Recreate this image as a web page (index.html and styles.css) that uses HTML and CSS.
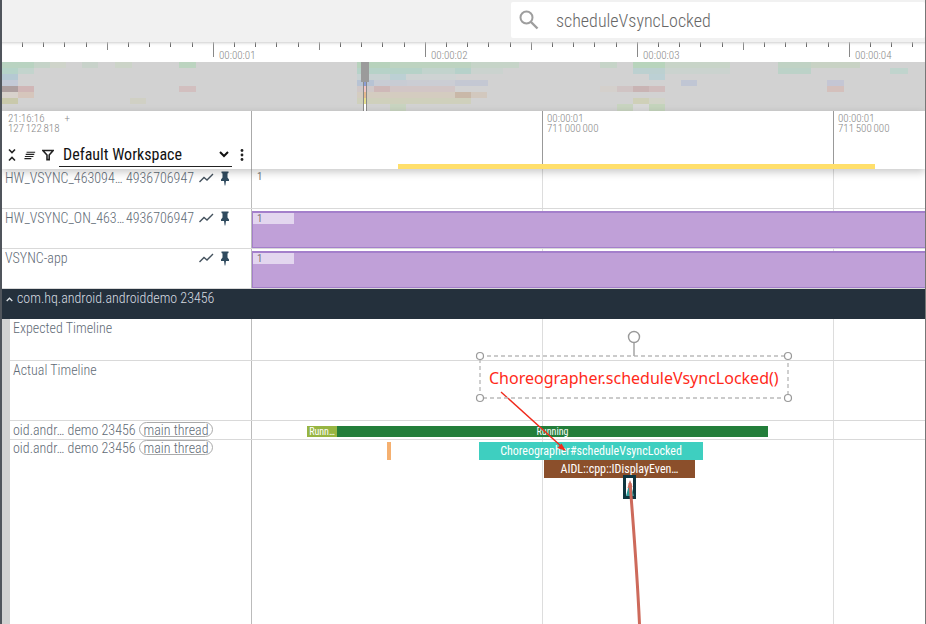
FILE: index.html
```html
<!DOCTYPE html>
<html>
<head>
<meta charset="utf-8">
<title>Trace viewer</title>
<link rel="stylesheet" href="styles.css">
</head>
<body>
<div class="page">

  <div class="topbar">
    <div class="search">
      <svg class="search-icon" width="24" height="24" viewBox="0 0 24 24"><circle cx="9.5" cy="9.5" r="6" fill="none" stroke="#9e9e9e" stroke-width="2"/><path d="M14 14l6.5 6.5" stroke="#9e9e9e" stroke-width="2.4" fill="none"/></svg>
      <span class="search-text">scheduleVsyncLocked</span>
    </div>
  </div>

  <div class="ruler">
    <span class="ruler-label first">00:00:01</span>
    <span class="ruler-label">00:00:02</span>
    <span class="ruler-label">00:00:03</span>
    <span class="ruler-label">00:00:04</span>
  </div>

  <div class="overview">
    <svg width="923" height="49" viewBox="2 62 923 49">
      <!-- row 0 -->
      <rect x="2" y="62" width="32" height="6" fill="#b9d3c1"/><rect x="34" y="62" width="16" height="6" fill="#c5d3c8"/><rect x="50" y="62" width="16" height="6" fill="#cfd4ca"/><rect x="82" y="62" width="16" height="6" fill="#c8d2ca"/><rect x="115" y="62" width="17" height="6" fill="#ccd4c8"/><rect x="179" y="62" width="17" height="6" fill="#bcd4c0"/>
      <rect x="357" y="62" width="33" height="6" fill="#b7d2bc"/><rect x="390" y="62" width="81" height="6" fill="#bdd3c0"/><rect x="471" y="62" width="48" height="6" fill="#c6d4c8"/>
      <rect x="600" y="62" width="17" height="6" fill="#c6d4c8"/><rect x="633" y="62" width="32" height="6" fill="#b8d4bc"/><rect x="665" y="62" width="65" height="6" fill="#c8d4c8"/><rect x="778" y="62" width="33" height="6" fill="#c0d2c4"/><rect x="811" y="62" width="49" height="6" fill="#c8d2c4"/>
      <!-- row 1 -->
      <rect x="2" y="68" width="16" height="6" fill="#b5d3c8"/><rect x="18" y="68" width="16" height="6" fill="#c3d4cd"/>
      <rect x="357" y="68" width="65" height="6" fill="#b6d2c8"/><rect x="422" y="68" width="33" height="6" fill="#c2d3cd"/><rect x="455" y="68" width="16" height="6" fill="#b6d1ca"/><rect x="471" y="68" width="32" height="6" fill="#cbd3cf"/>
      <rect x="633" y="68" width="32" height="6" fill="#bcd0d0"/><rect x="665" y="68" width="65" height="6" fill="#cbd3cf"/><rect x="778" y="68" width="33" height="6" fill="#bcd2c8"/><rect x="890" y="68" width="18" height="6" fill="#c0d4cd"/>
      <!-- row 2 -->
      <rect x="2" y="74" width="16" height="6" fill="#b5c9d3"/>
      <rect x="357" y="74" width="33" height="6" fill="#c8d2d3"/><rect x="390" y="74" width="16" height="6" fill="#bcd0d4"/><rect x="406" y="74" width="50" height="6" fill="#ced3d3"/>
      <rect x="649" y="74" width="16" height="6" fill="#bcd0d4"/>
      <!-- row 3 -->
      <rect x="2" y="80" width="16" height="6" fill="#c3c9d6"/>
      <rect x="357" y="80" width="17" height="6" fill="#b7c3d4"/><rect x="374" y="80" width="33" height="6" fill="#c8ccd4"/><rect x="407" y="80" width="48" height="6" fill="#cbcdd4"/><rect x="455" y="80" width="33" height="6" fill="#c4c8d3"/>
      <rect x="681" y="80" width="16" height="6" fill="#c0c6d4"/><rect x="827" y="80" width="17" height="6" fill="#c4c6d4"/>
      <!-- row 4 -->
      <rect x="2" y="86" width="16" height="6" fill="#ad9f9f"/><rect x="18" y="86" width="16" height="6" fill="#d0b6b6"/><rect x="179" y="86" width="17" height="6" fill="#d2bfbf"/>
      <rect x="357" y="86" width="17" height="6" fill="#d0c8c8"/><rect x="374" y="86" width="16" height="6" fill="#ceb8b8"/><rect x="390" y="86" width="65" height="6" fill="#d2c6c6"/>
      <rect x="600" y="86" width="17" height="6" fill="#d4d0cc"/><rect x="617" y="86" width="16" height="6" fill="#d0c4c4"/><rect x="633" y="86" width="16" height="6" fill="#c9b4b4"/><rect x="649" y="86" width="16" height="6" fill="#d0bdbd"/><rect x="827" y="86" width="17" height="6" fill="#d4c0bc"/>
      <!-- row 5 -->
      <rect x="2" y="92" width="16" height="6" fill="#d8d2cc"/><rect x="18" y="92" width="16" height="6" fill="#d6c6bc"/>
      <rect x="357" y="92" width="98" height="6" fill="#d4ccc0"/><rect x="455" y="92" width="16" height="6" fill="#c9b8a8"/><rect x="471" y="92" width="16" height="6" fill="#d2c8be"/>
      <!-- row 6 -->
      <rect x="2" y="98" width="16" height="6" fill="#c9c9ab"/><rect x="130" y="98" width="16" height="6" fill="#d0d0c4"/>
      <rect x="357" y="98" width="114" height="6" fill="#cfd0bc"/>
      <rect x="633" y="98" width="16" height="6" fill="#cfd0b8"/><rect x="649" y="98" width="16" height="6" fill="#d2d4c8"/>
      <!-- row 7 -->
      <rect x="390" y="104" width="16" height="7" fill="#c8d4c0"/>
      <rect x="617" y="104" width="16" height="7" fill="#c8d4c0"/><rect x="633" y="104" width="16" height="7" fill="#d8d8d8"/><rect x="649" y="104" width="16" height="7" fill="#c4d4bc"/>
      <!-- handle -->
      <rect x="361" y="62" width="8" height="20" fill="#9b9b9b"/>
      <rect x="364" y="82" width="2" height="4" fill="#8d9fd6"/><rect x="364" y="86" width="2" height="6" fill="#f2c4c4"/><rect x="364" y="92" width="2" height="6" fill="#e6b98e"/><rect x="364" y="98" width="2" height="6" fill="#e6e08e"/><rect x="364" y="104" width="2" height="7" fill="#ffffff"/>
      <rect x="363" y="82" width="1" height="29" fill="#8a8a8a"/><rect x="366" y="82" width="1" height="29" fill="#8a8a8a"/>
    </svg>
  </div>

  <div class="header-row">
    <div class="side header-side">
      <div class="time-origin">
        <div class="time-stack"><span>21:16:16</span><span>127 122 818</span></div>
        <span class="plus">+</span>
      </div>
      <div class="toolbar">
        <svg class="tool-collapse" width="10" height="14" viewBox="0 0 10 14"><path d="M2 1.500l3 3 3-3M2 12.500l3-3 3 3" fill="none" stroke="#222" stroke-width="1.6"/></svg>
        <svg class="tool-lines" width="12" height="9" viewBox="0 0 14 10"><path d="M3 1.200h10M2 3.700h10M1 6.200h10M0.500 8.700h8" fill="none" stroke="#222" stroke-width="1.3"/></svg>
        <svg class="tool-filter" width="12" height="12" viewBox="0 0 13 12"><path d="M1 1.200h11L7.800 6v5H5.400V6z" fill="none" stroke="#222" stroke-width="1.7"/></svg>
        <div class="workspace">
          <span>Default Workspace</span>
          <svg width="10" height="7" viewBox="0 0 10 7"><path d="M1 1l4 4 4-4" fill="none" stroke="#111" stroke-width="2"/></svg>
        </div>
        <svg class="dots" width="4" height="12" viewBox="0 0 4 12"><circle cx="2" cy="1.500" r="1.400" fill="#222"/><circle cx="2" cy="6" r="1.400" fill="#222"/><circle cx="2" cy="10.500" r="1.400" fill="#222"/></svg>
      </div>
    </div>
    <div class="canvas header-canvas">
      <div class="time-stack mark-one"><span>00:00:01</span><span>711 000 000</span></div>
      <div class="time-stack mark-two"><span>00:00:01</span><span>711 500 000</span></div>
      <div class="selection-bar"></div>
    </div>
  </div>

  <div class="tracks">
    <div class="row counter">
      <div class="side">
        <span class="name">HW_VSYNC_463094…</span><span class="num">4936706947</span>
        <svg class="chart" width="15" height="10" viewBox="0 0 15 10"><path d="M0.500 9l4.500-4.500 3 2.500 6-6" fill="none" stroke="#44525e" stroke-width="1.400"/></svg>
        <svg class="pin" width="10" height="15" viewBox="0 0 10 15"><path d="M1.500 0.500h7v1.500l-1 0.500v4l1.500 2v1.500H6L5.300 14.500h-0.600L4 10H1V8.500l1.500-2v-4l-1-0.500z" fill="#2f4a5e"/></svg>
      </div>
      <div class="canvas"><span class="count">1</span></div>
    </div>
    <div class="row counter">
      <div class="side">
        <span class="name">HW_VSYNC_ON_463…</span><span class="num">4936706947</span>
        <svg class="chart" width="15" height="10" viewBox="0 0 15 10"><path d="M0.500 9l4.500-4.500 3 2.500 6-6" fill="none" stroke="#44525e" stroke-width="1.400"/></svg>
        <svg class="pin" width="10" height="15" viewBox="0 0 10 15"><path d="M1.500 0.500h7v1.500l-1 0.500v4l1.500 2v1.500H6L5.300 14.500h-0.600L4 10H1V8.500l1.500-2v-4l-1-0.500z" fill="#2f4a5e"/></svg>
      </div>
      <div class="canvas"><div class="purple"><span class="purple-tag">1</span></div></div>
    </div>
    <div class="row counter">
      <div class="side">
        <span class="name">VSYNC-app</span>
        <svg class="chart" width="15" height="10" viewBox="0 0 15 10"><path d="M0.500 9l4.500-4.500 3 2.500 6-6" fill="none" stroke="#44525e" stroke-width="1.400"/></svg>
        <svg class="pin" width="10" height="15" viewBox="0 0 10 15"><path d="M1.500 0.500h7v1.500l-1 0.500v4l1.500 2v1.500H6L5.300 14.500h-0.600L4 10H1V8.500l1.500-2v-4l-1-0.500z" fill="#2f4a5e"/></svg>
      </div>
      <div class="canvas"><div class="purple"><span class="purple-tag">1</span></div></div>
    </div>

    <div class="group-head">
      <svg width="7" height="5" viewBox="0 0 7 5"><path d="M0.700 4l2.800-2.800L6.300 4" fill="none" stroke="#dfe3e7" stroke-width="1.300"/></svg>
      <span>com.hq.android.androiddemo 23456</span>
    </div>

    <div class="group-body">
      <div class="row expected">
        <div class="side sub"><span class="name">Expected Timeline</span></div>
        <div class="canvas"></div>
      </div>
      <div class="row actual">
        <div class="side sub"><span class="name">Actual Timeline</span></div>
        <div class="canvas"></div>
      </div>
      <div class="row state">
        <div class="side sub"><span class="name">oid.andr… demo 23456</span><span class="chip">main thread</span></div>
        <div class="canvas">
          <div class="slice runnable">Runn…</div>
          <div class="slice running">Running</div>
        </div>
      </div>
      <div class="row slices">
        <div class="side sub"><span class="name">oid.andr… demo 23456</span><span class="chip">main thread</span></div>
        <div class="canvas">
          <div class="slice orange"></div>
          <div class="slice teal">Choreographer#scheduleVsyncLocked</div>
          <div class="slice brown">AIDL::cpp::IDisplayEven…</div>
        </div>
      </div>
    </div>
  </div>

  <svg class="overlay" width="926" height="624" viewBox="0 0 926 624">
    <rect x="624.500" y="476.500" width="10" height="21" fill="#fff" stroke="#0f3640" stroke-width="3"/>
    <path d="M626 496l4-15 4 15z" fill="#2f9c9c"/>
    <path d="M630 483C633 520 637 570 639.500 624" fill="none" stroke="#cd6a5b" stroke-width="3"/>
    <path d="M630 480l-2.500 8 5-1z" fill="#cd6a5b"/>
    <line x1="501" y1="392" x2="562" y2="447" stroke="#f02a1c" stroke-width="1.400"/>
    <path d="M566 451l-8.500-3 4-4.500z" fill="#f02a1c"/>
    <rect x="480" y="356" width="308" height="42" fill="none" stroke="#bbb" stroke-width="1.400" stroke-dasharray="4 3"/>
    <line x1="634" y1="343" x2="634" y2="356" stroke="#aaa" stroke-width="1.600"/>
    <circle cx="634" cy="337" r="5.500" fill="#fff" stroke="#999" stroke-width="1.400"/>
    <circle cx="480" cy="356" r="3.500" fill="#fff" stroke="#999" stroke-width="1.200"/>
    <circle cx="788" cy="356" r="3.500" fill="#fff" stroke="#999" stroke-width="1.200"/>
    <circle cx="480" cy="398" r="3.500" fill="#fff" stroke="#999" stroke-width="1.200"/>
    <circle cx="788" cy="398" r="3.500" fill="#fff" stroke="#999" stroke-width="1.200"/>
  </svg>
  <div class="note">Choreographer.scheduleVsyncLocked()</div>

</div>
</body>
</html>
```

FILE: styles.css
```css
html, body {
  margin: 0;
  padding: 0;
  background: #fff;
}

.page {
  position: relative;
  width: 926px;
  height: 624px;
  overflow: hidden;
  box-sizing: border-box;
  border-left: 2px solid #50555c;
  border-right: 1px solid #777;
  font-family: "Roboto", "Liberation Sans", sans-serif;
  font-stretch: 75%;
  font-weight: 300;
  color: #5f6b76;
}

/* top search bar */
.topbar {
  height: 42px;
  background: #f1f1f1;
  display: flex;
  justify-content: flex-end;
}

.search {
  width: 414px;
  height: 36px;
  margin-top: 2px;
  background: #fff;
  border-radius: 2px;
  display: flex;
  align-items: center;
  gap: 15px;
  padding-left: 6px;
  box-sizing: border-box;
}

.search-text {
  font-size: 18px;
  color: #666;
}

/* time ruler */
.ruler {
  height: 20px;
  display: flex;
  padding-left: 217px;
  box-shadow: inset 0 3px 3px -2px #ccc;
  background-image:
    repeating-linear-gradient(to right, #888 0 1px, transparent 1px 212px),
    repeating-linear-gradient(to right, #888 0 1px, transparent 1px 106px),
    repeating-linear-gradient(to right, #666 0 1px, transparent 1px 21.2px);
  background-repeat: no-repeat;
  background-size: 100% 15px, 100% 8px, 100% 5px;
  background-position: 211px 0, 105px 0, 20px 0;
}

.ruler-label {
  width: 212px;
  flex: none;
  font-size: 11px;
  color: #888;
  padding-top: 8px;
  line-height: 12px;
}

.overview {
  height: 49px;
  background: #d2d2d2;
}

.overview svg {
  display: block;
}

/* header with workspace picker */
.header-row {
  height: 58px;
  display: flex;
  position: relative;
  z-index: 2;
  box-shadow: 0 3px 8px rgba(0, 0, 0, 0.22);
  background: #fff;
}

.side {
  width: 250px;
  flex: none;
  box-sizing: border-box;
  display: flex;
  border-right: 1px solid #bbb;
}

.header-side {
  flex-direction: column;
  justify-content: space-between;
  padding: 3px 0 0 6px;
  border-right-color: #aaa;
}

.time-origin {
  display: flex;
  gap: 5px;
}

.time-stack {
  display: flex;
  flex-direction: column;
  font-size: 11px;
  line-height: 10px;
  word-spacing: -0.8px;
  color: #888;
}

.plus {
  font-size: 11px;
  line-height: 10px;
  color: #888;
}

.toolbar {
  display: flex;
  align-items: center;
  height: 24px;
  margin: 0 0 2px -1px;
}

.tool-lines {
  margin-left: 7px;
}

.tool-filter {
  margin-left: 6px;
}

.workspace {
  width: 173px;
  height: 23px;
  box-sizing: border-box;
  border-bottom: 1px solid #222;
  padding: 0 3px 0 4px;
  margin-left: 5px;
  display: flex;
  align-items: center;
  justify-content: space-between;
  font-size: 16px;
  font-weight: 400;
  color: #111;
}

.dots {
  margin-left: 8px;
}

.canvas {
  flex: 1;
  position: relative;
  background-image:
    linear-gradient(#ddd, #ddd),
    linear-gradient(#ddd, #ddd);
  background-repeat: no-repeat;
  background-size: 1px 100%;
  background-position: 290px 0, 581px 0;
}

.header-canvas {
  background-image:
    linear-gradient(#999, #999),
    linear-gradient(#999, #999);
}

.mark-one {
  position: absolute;
  left: 295px;
  top: 3px;
}

.mark-two {
  position: absolute;
  left: 586px;
  top: 3px;
}

.selection-bar {
  position: absolute;
  left: 146px;
  width: 477px;
  bottom: 0;
  height: 5px;
  background: #ffdf6b;
}

/* track rows */
.row {
  display: flex;
  box-sizing: border-box;
  border-bottom: 1px solid #d9d9d9;
}

.counter {
  height: 40px;
}

.counter .side {
  padding-left: 3px;
  align-items: flex-start;
}

.name {
  font-size: 14px;
  line-height: 18px;
  white-space: nowrap;
}

.num {
  font-size: 14px;
  line-height: 18px;
  margin-left: auto;
}

.counter .chart {
  margin: 4px 0 0 5px;
}

.counter .name + .chart {
  margin-left: auto;
}

.counter .pin {
  margin: 2px 21px 0 6px;
}

.count {
  position: absolute;
  left: 5px;
  top: 2px;
  font-size: 11px;
  font-weight: 400;
  line-height: 12px;
  color: #777;
}

.purple {
  position: absolute;
  left: 0;
  right: 0;
  top: 2px;
  bottom: 0;
  background: #c0a0d8;
  border-top: 2px solid #a47fcb;
  border-left: 1px solid #a47fcb;
  border-bottom: 1px solid #a47fcb;
}

.purple-tag {
  display: block;
  width: 37px;
  height: 11px;
  padding-left: 4px;
  background: #e3d6ef;
  font-size: 11px;
  font-weight: 400;
  line-height: 11px;
  color: #777;
}

.group-head {
  height: 30px;
  box-sizing: border-box;
  background: #24303c;
  color: #d6dbe0;
  display: flex;
  align-items: flex-start;
  gap: 4px;
  padding: 1px 0 0 4px;
  font-size: 14px;
  line-height: 17px;
}

.group-head svg {
  margin-top: 7px;
}

.group-body {
  border-left: 8px solid #d2d2d2;
}

.sub {
  width: 242px;
  padding-left: 3px;
  align-items: flex-start;
}

.expected {
  height: 42px;
}

.actual {
  height: 60px;
}

.state {
  height: 19px;
}

.slices {
  height: 190px;
  border-bottom: 0;
}

.slices .name,
.slices .chip {
  position: relative;
  top: -1px;
}

.chip {
  font-size: 14px;
  line-height: 14px;
  height: 13px;
  padding: 0 4px;
  margin: 1px 0 0 3px;
  border: 1px solid #aaa;
  border-radius: 8px;
}

.slice {
  position: absolute;
  color: #fff;
  font-size: 10px;
  font-weight: 400;
  text-align: center;
  white-space: nowrap;
  overflow: hidden;
}

.runnable {
  left: 55px;
  width: 30px;
  top: 5px;
  height: 11px;
  line-height: 11px;
  background: #97b542;
}

.running {
  left: 85px;
  width: 431px;
  top: 5px;
  height: 11px;
  line-height: 11px;
  background: #237e3a;
  text-indent: 0;
}

.orange {
  left: 135px;
  width: 4px;
  top: 2px;
  height: 18px;
  background: #f5b070;
}

.teal {
  left: 227px;
  width: 224px;
  top: 2px;
  height: 18px;
  line-height: 18px;
  font-size: 12px;
  background: #3ecfc0;
}

.brown {
  left: 292px;
  width: 151px;
  top: 20px;
  height: 18px;
  line-height: 18px;
  font-size: 12px;
  background: #8b4f2b;
}

/* annotation drawn on top of the trace */
.overlay {
  position: absolute;
  left: -2px;
  top: 0;
  z-index: 3;
  pointer-events: none;
}

.note {
  position: absolute;
  left: 487px;
  top: 367px;
  z-index: 4;
  font-family: "Noto Sans", sans-serif;
  font-size: 16px;
  font-weight: 400;
  line-height: 22px;
  color: #ff2a1a;
  font-stretch: 100%;
  white-space: nowrap;
}
```
